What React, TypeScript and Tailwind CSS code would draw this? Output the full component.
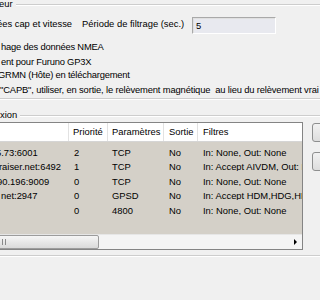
import React from "react";

const rows = [
  { host: "5.73:6001", hostMl: "-ml-[4px]", pr: "2", par: "TCP", so: "No", fi: "In: None, Out: None" },
  { host: "raiser.net:6492", hostMl: "-ml-[1px]", pr: "1", par: "TCP", so: "No", fi: "In: Accept AIVDM, Out: None" },
  { host: "90.196:9009", hostMl: "-ml-[3px]", pr: "0", par: "TCP", so: "No", fi: "In: None, Out: None" },
  { host: "net:2947", hostMl: "ml-[1px]", pr: "0", par: "GPSD", so: "No", fi: "In: Accept HDM,HDG,HDT, Out: None" },
  { host: "", hostMl: "", pr: "0", par: "4800", so: "No", fi: "In: None, Out: None" },
];

function GroupLine() {
  return <div className="h-[2px] border-t border-[#cdcdcd] bg-white" />;
}

export default function App() {
  return (
    <div
      className="relative w-[320px] h-[300px] overflow-hidden bg-[#f0f0f0] text-black text-[9.4px] leading-none whitespace-nowrap"
      style={{ fontFamily: '"Liberation Sans", Arial, sans-serif' }}
    >
      {/* Top group */}
      <div className="h-[9px] flex items-center">
        <span className="-ml-[1px] pr-[3px] -mt-[1px]">eur</span>
        <div className="flex-1 mt-[1px]">
          <GroupLine />
        </div>
      </div>
      <div className="mt-[8px] h-[17px] flex items-center">
        <div className="w-[82px] -mt-[3px] overflow-hidden">
          <span className="inline-block -ml-[3px]">ées cap et vitesse</span>
        </div>
        <span className="w-[110px] -mt-[3px]">Période de filtrage (sec.)</span>
        <div className="w-[84px] h-[17px] border border-[#a9a9a9] border-r-white border-b-white bg-[#e8e9ef] flex items-center pl-[3px] shadow-[inset_1px_1px_0_#e0e0e0]">
          5
        </div>
      </div>
      <div className="mt-[6px] h-[14px] flex items-center pl-[1px] tracking-[-0.2px]">hage des données NMEA</div>
      <div className="mt-[1px] h-[14px] flex items-center pl-[1px] tracking-[-0.2px]">ent pour Furuno GP3X</div>
      <div className="h-[12px] flex items-center -ml-[2px] tracking-[-0.2px]">GRMN (Hôte) en téléchargement</div>
      <div className="mt-[2px] h-[14px] flex items-center whitespace-pre tracking-[-0.15px]">
        {'"CAPB", utiliser, en sortie, le relèvement magnétique  au lieu du relèvement vrai'}
      </div>
      <div className="mt-[1px]">
        <GroupLine />
      </div>

      {/* Connexion group */}
      <div className="mt-[10px] h-[9px] flex items-center">
        <span className="pr-[3px]">xion</span>
        <div className="flex-1 mt-[2px]">
          <GroupLine />
        </div>
      </div>

      <div className="mt-[3px] flex">
        <div className="-ml-[1px] w-[304px] h-[128px] border border-[#848484] bg-white flex flex-col">
          {/* header */}
          <div className="h-[19px] flex border-b border-[#d5d5d5] bg-white">
            <div className="w-[69px] border-r border-[#e2e2e2]" />
            <div className="w-[39px] border-r border-[#e2e2e2] pl-[4px] flex items-center">Priorité</div>
            <div className="w-[56px] border-r border-[#e2e2e2] pl-[4px] flex items-center">Paramètres</div>
            <div className="w-[34px] border-r border-[#e2e2e2] pl-[5px] flex items-center">Sortie</div>
            <div className="flex-1 pl-[5px] flex items-center">Filtres</div>
          </div>
          {/* data */}
          <div className="flex-1 bg-[#d4d0c8] pt-[3px] overflow-hidden">
            {rows.map((r, i) => (
              <div key={i} className="h-[14.5px] flex items-center">
                <div className="w-[69px] overflow-hidden">
                  <span className={"inline-block " + r.hostMl}>{r.host}</span>
                </div>
                <div className="w-[39px] pl-[5px]">{r.pr}</div>
                <div className="w-[56px] pl-[4px]">{r.par}</div>
                <div className="w-[34px] pl-[5px]">{r.so}</div>
                <div className="flex-1 pl-[5px] overflow-hidden">{r.fi}</div>
              </div>
            ))}
          </div>
          {/* scrollbar */}
          <div className="h-[15px] bg-[#f4f4f4] flex items-center border-t border-[#e6e6e6]">
            <div className="-ml-[2px] w-[101px] h-[14px] rounded-[2px] border border-[#9c9c9c] bg-gradient-to-b from-[#f6f6f6] to-[#dadada] flex items-center pl-[3px] gap-[2px]">
              <div className="w-[1px] h-[6px] bg-[#8a8a8a]" />
              <div className="w-[1px] h-[6px] bg-[#8a8a8a]" />
            </div>
            <div className="flex-1" />
            <div className="w-[14px] h-[14px] flex items-center justify-center">
              <div className="w-0 h-0 border-y-[3px] border-y-transparent border-l-[3px] border-l-black" />
            </div>
          </div>
        </div>
        <div className="ml-[9px] flex flex-col">
          <div className="mt-[1px] w-[20px] h-[19px] rounded-[3px] border border-[#8e8f8f] bg-gradient-to-b from-[#f2f2f2] to-[#dddddd]" />
          <div className="mt-[10px] w-[20px] h-[19px] rounded-[3px] border border-[#8e8f8f] bg-gradient-to-b from-[#f2f2f2] to-[#dddddd]" />
        </div>
      </div>
      <div className="mt-[5px]">
        <GroupLine />
      </div>
    </div>
  );
}
